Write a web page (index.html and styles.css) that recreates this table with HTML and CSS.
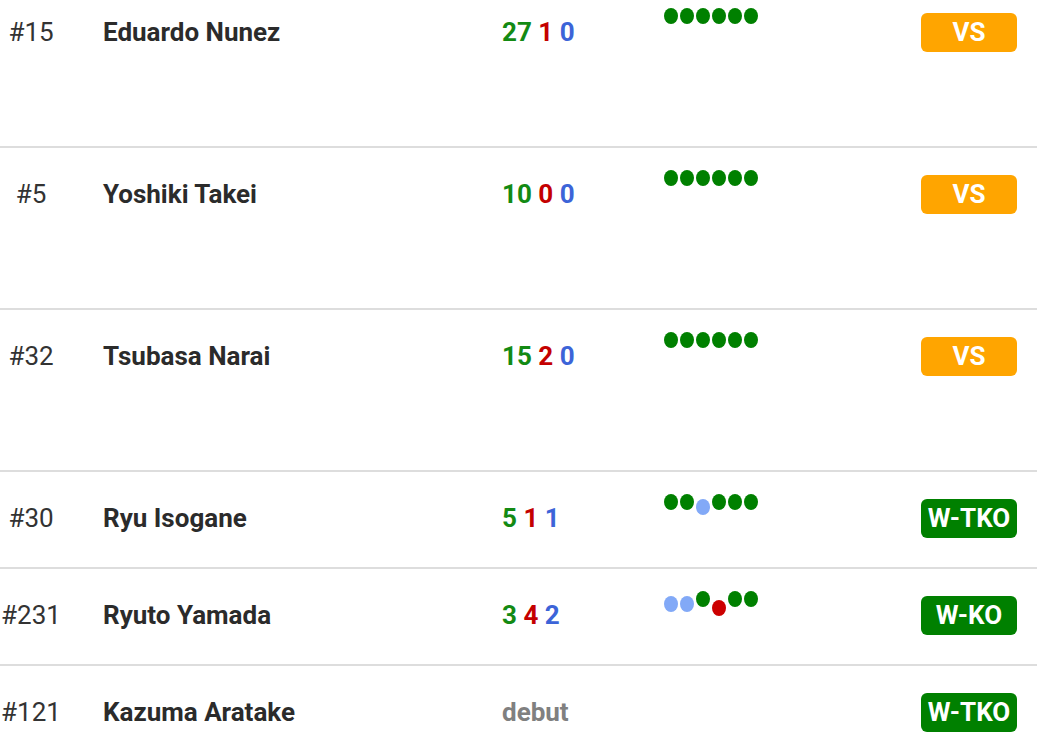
FILE: index.html
```html
<!DOCTYPE html>
<html lang="en">
<head>
<meta charset="utf-8">
<title>Fight record</title>
<link rel="stylesheet" href="styles.css">
</head>
<body>
<div class="list">
  <div class="row upcoming">
    <div class="rank">#15</div>
    <div class="name">Eduardo Nunez</div>
    <div class="stats"><span class="w">27</span> <span class="l">1</span> <span class="d">0</span></div>
    <div class="dots"><span class="dot win"></span><span class="dot win"></span><span class="dot win"></span><span class="dot win"></span><span class="dot win"></span><span class="dot win"></span></div>
    <div class="result"><span class="badge vs">VS</span></div>
  </div>
  <div class="row upcoming">
    <div class="rank">#5</div>
    <div class="name">Yoshiki Takei</div>
    <div class="stats"><span class="w">10</span> <span class="l">0</span> <span class="d">0</span></div>
    <div class="dots"><span class="dot win"></span><span class="dot win"></span><span class="dot win"></span><span class="dot win"></span><span class="dot win"></span><span class="dot win"></span></div>
    <div class="result"><span class="badge vs">VS</span></div>
  </div>
  <div class="row upcoming">
    <div class="rank">#32</div>
    <div class="name">Tsubasa Narai</div>
    <div class="stats"><span class="w">15</span> <span class="l">2</span> <span class="d">0</span></div>
    <div class="dots"><span class="dot win"></span><span class="dot win"></span><span class="dot win"></span><span class="dot win"></span><span class="dot win"></span><span class="dot win"></span></div>
    <div class="result"><span class="badge vs">VS</span></div>
  </div>
  <div class="row">
    <div class="rank">#30</div>
    <div class="name">Ryu Isogane</div>
    <div class="stats"><span class="w">5</span> <span class="l">1</span> <span class="d">1</span></div>
    <div class="dots"><span class="dot win"></span><span class="dot win"></span><span class="dot draw"></span><span class="dot win"></span><span class="dot win"></span><span class="dot win"></span></div>
    <div class="result"><span class="badge won">W-TKO</span></div>
  </div>
  <div class="row">
    <div class="rank">#231</div>
    <div class="name">Ryuto Yamada</div>
    <div class="stats"><span class="w">3</span> <span class="l">4</span> <span class="d">2</span></div>
    <div class="dots"><span class="dot draw"></span><span class="dot draw"></span><span class="dot win"></span><span class="dot loss"></span><span class="dot win"></span><span class="dot win"></span></div>
    <div class="result"><span class="badge won">W-KO</span></div>
  </div>
  <div class="row">
    <div class="rank">#121</div>
    <div class="name">Kazuma Aratake</div>
    <div class="stats"><span class="debut">debut</span></div>
    <div class="dots"></div>
    <div class="result"><span class="badge won">W-TKO</span></div>
  </div>
</div>
</body>
</html>
```
FILE: styles.css
```css
html, body {
  margin: 0;
  padding: 0;
  background: #ffffff;
}
body {
  font-family: Roboto, "Liberation Sans", Arial, sans-serif;
  color: #333333;
  overflow: hidden;
}
.list {
  margin-top: -16px;
}
.row {
  display: grid;
  grid-template-columns: 62px 440px 162px 1fr auto;
  align-items: start;
  border-top: 2px solid #dddddd;
  padding: 22px 20px 25px 0;
}
.row.upcoming {
  padding-bottom: 90px;
}
.rank {
  font-size: 26px;
  line-height: 48px;
  text-align: center;
  font-weight: 400;
  color: #333333;
}
.name {
  padding-left: 41px;
  font-size: 26px;
  line-height: 48px;
  font-weight: 700;
  color: #2b2b2b;
}
.stats {
  font-size: 26px;
  line-height: 48px;
  font-weight: 700;
}
.w { color: #138a13; }
.l { color: #c40000; }
.d { color: #3c64d8; }
.debut { color: #808080; }
.dots {
  display: flex;
  align-items: flex-start;
  gap: 2px;
  padding-top: 0;
}
.dot {
  width: 14px;
  height: 16px;
  border-radius: 50%;
  flex: none;
}
.dot.win { background: #008000; }
.dot.draw { background: #82a9f7; margin-top: 5px; }
.dot.loss { background: #cc0000; margin-top: 9px; }
.result {
  height: 48px;
  display: flex;
  align-items: center;
}
.badge {
  display: block;
  width: 96px;
  height: 39px;
  line-height: 39px;
  border-radius: 6px;
  text-align: center;
  color: #ffffff;
  font-size: 26px;
  font-weight: 700;
}
.badge.vs { background: #ffa500; }
.badge.won { background: #008000; }
```
